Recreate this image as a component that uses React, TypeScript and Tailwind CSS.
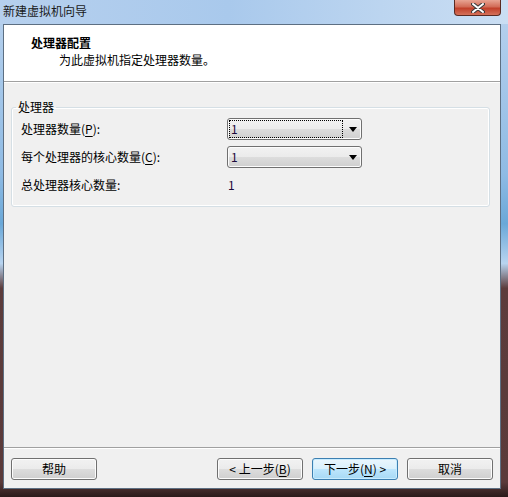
import React from 'react';

const font = { fontFamily: '"Noto Sans CJK SC", "Liberation Sans", sans-serif' };

function Mnemonic({ k }: { k: string }) {
  return (
    <>
      (<span className="underline underline-offset-2">{k}</span>)
    </>
  );
}

function Combo({ focused }: { focused?: boolean }) {
  return (
    <div className="relative flex h-[22px] w-[135px] items-center rounded-[3px] border border-[#707070] bg-[linear-gradient(#f2f2f2_0%,#ebebeb_50%,#dddddd_50%,#cfcfcf_100%)] shadow-[inset_0_0_0_1px_#fcfcfc]">
      <div
        className={`ml-[2px] flex h-[16px] w-[112px] items-center pl-[1px] text-[12px] leading-none text-[#1c0a3c] ${
          focused ? 'outline-1 outline-dotted outline-black' : ''
        }`}
      >
        1
      </div>
      <svg className="ml-auto mr-[4px]" width="8" height="5" viewBox="0 0 8 5">
        <path d="M0 0h8L4 5z" fill="#000" />
      </svg>
    </div>
  );
}

function Btn({ children, primary }: { children: React.ReactNode; primary?: boolean }) {
  return (
    <button
      className={`flex h-[22px] w-[86px] items-center justify-center rounded-[3px] border text-[12px] leading-none text-black ${
        primary
          ? 'border-[#3c7fb1] bg-[linear-gradient(#eaf6fd_0%,#d9f0fc_50%,#bee6fd_50%,#a7d9f5_100%)] shadow-[inset_0_0_0_1px_#c8ecff]'
          : 'border-[#707070] bg-[linear-gradient(#f2f2f2_0%,#ebebeb_50%,#dddddd_50%,#cfcfcf_100%)] shadow-[inset_0_0_0_1px_#fcfcfc]'
      }`}
    >
      {children}
    </button>
  );
}

export default function App() {
  return (
    <div
      className="flex h-[497px] w-[508px] flex-col overflow-hidden bg-[linear-gradient(180deg,#b9d2ee_0%,#8fbbe4_35%,#6aa8d8_45%,#b8d4f0_53%,#5c3c3c_58%,#5a3a3a_97%,#2a1a1a_100%)] text-black"
      style={font}
    >
      {/* Title bar */}
      <div className="flex h-[24px] shrink-0 items-start bg-[linear-gradient(90deg,#b6d0ee_0%,#a9c9ec_45%,#bcd5f0_75%,#cadef3_100%)]">
        <span className="ml-[3px] mt-[4px] text-[12px] leading-[14px] text-[#1a1a1a]">新建虚拟机向导</span>
        <div className="ml-auto mr-[7px] flex h-[16px] w-[47px] items-center justify-center rounded-b-[4px] border border-t-0 border-[#5a2a22] bg-[linear-gradient(#e8a493_0%,#d26c57_45%,#c1402a_55%,#d4715a_100%)]">
          <svg width="14" height="10" viewBox="0 0 14 10">
            <path d="M2 1l10 8M12 1L2 9" stroke="#3a3a3a" strokeWidth="4" strokeLinecap="round" />
            <path d="M2 1l10 8M12 1L2 9" stroke="#fff" strokeWidth="2" strokeLinecap="round" />
          </svg>
        </div>
      </div>

      {/* Client area */}
      <div className="mb-[8px] ml-[3px] mr-[7px] flex flex-1 flex-col border border-[#5d6f82] bg-[#f0f0f0]">
        {/* Header */}
        <div className="h-[57px] shrink-0 border-b border-[#a0a0a0] bg-white">
          <div className="ml-[27px] mt-[11px] text-[12px] font-bold leading-[14px]">处理器配置</div>
          <div className="ml-[55px] mt-[3px] text-[12px] leading-[14px]">为此虚拟机指定处理器数量。</div>
        </div>
        <div className="h-px bg-white" />

        {/* Body */}
        <div className="flex flex-1 flex-col px-[7px]">
          <fieldset className="mt-[17px] w-[479px] rounded-[3px] border border-[#d5dfe5] shadow-[inset_0_0_0_1px_#ffffff]">
            <legend className="ml-[4px] px-[2px] text-[12px] leading-[14px]">处理器</legend>
            <div className="grid grid-cols-[206px_135px] gap-y-[6px] pb-[10px] pl-[9px] pt-[4px] text-[12px] leading-[14px]">
              <div className="flex h-[22px] items-center">
                处理器数量<Mnemonic k="P" />:
              </div>
              <Combo focused />
              <div className="flex h-[22px] items-center">
                每个处理器的核心数量<Mnemonic k="C" />:
              </div>
              <Combo />
              <div className="flex h-[22px] items-center">总处理器核心数量:</div>
              <div className="flex h-[22px] items-center pl-[1px] text-[#1c0a3c]">1</div>
            </div>
          </fieldset>

          <div className="flex-1" />
        </div>

        {/* Footer */}
        <div className="h-px bg-[#a0a0a0]" />
        <div className="h-px bg-white" />
        <div className="flex items-center px-[7px] pb-[8px] pt-[9px]">
          <Btn>帮助</Btn>
          <div className="ml-auto flex gap-[9px]">
            <Btn>
              &lt; 上一步<Mnemonic k="B" />
            </Btn>
            <Btn primary>
              下一步<Mnemonic k="N" /> &gt;
            </Btn>
            <Btn>取消</Btn>
          </div>
        </div>
      </div>
    </div>
  );
}
